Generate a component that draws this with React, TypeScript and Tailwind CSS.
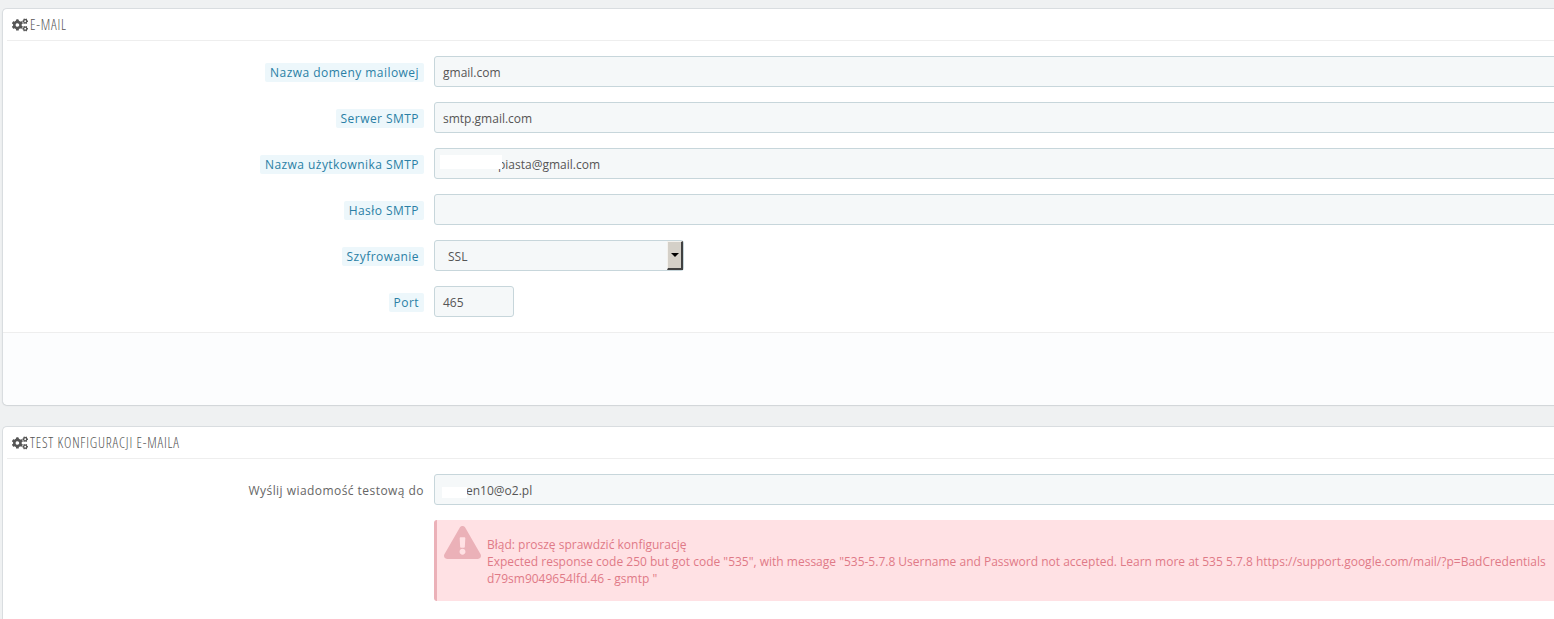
import React from 'react';
import { FaCogs, FaExclamationTriangle } from 'react-icons/fa';

const inputClass = 'h-[31px] w-[1200px] shrink-0 rounded-[3px] border border-[#c7d6db] bg-[#f5f8f9] pl-2 text-[12px] leading-[31px] text-[#555]';

const PanelHeading: React.FC<{ title: string }> = ({ title }) => (
    <div className="mx-1 flex h-[32px] items-center gap-[2px] border-b border-[#eeeeee] pl-[5px] text-[14px] text-[#555]">
        <FaCogs className="h-[14px] w-[16px] text-[#555]" />
        <span className="font-light font-stretch-[75%] tracking-[0.8px]">{title}</span>
    </div>
);

const Label: React.FC<{ text: string; hint?: boolean }> = ({ text, hint = true }) => (
    <div className="flex w-[421px] shrink-0 justify-end pt-[2px]">
        <span className={hint ? 'rounded-[2px] bg-[#edf7fb] px-[5px] leading-[19px] tracking-[0.45px] text-[#2a7fa5]' : 'leading-[19px] tracking-[0.45px] text-[#666]'}>
            {text}
        </span>
    </div>
);

const FormRow: React.FC<{ label: string; hint?: boolean; children?: React.ReactNode }> = ({ label, hint, children }) => (
    <div className="flex items-center gap-[10px]">
        <Label text={label} hint={hint} />
        {children}
    </div>
);

const Masked: React.FC<{ mask: string; children: React.ReactNode }> = ({ mask, children }) => (
    <div className={inputClass + ' relative'}>
        <span className={`absolute bg-white ${mask}`} />
        {children}
    </div>
);

const App: React.FC = () => {
    return (
        <div className="h-[619px] w-full overflow-hidden bg-[#eff1f2] pt-2 pl-[2px] font-['Open_Sans',sans-serif] text-[12px]">
            <div className="w-[1700px] rounded-[5px] border-t border-l border-[#d9dde0] bg-white shadow-[0_1px_1px_#d0d4d7]">
                <PanelHeading title="E-MAIL" />
                <div className="flex flex-col gap-[15px] pt-[15px] pb-[15px]">
                    <FormRow label="Nazwa domeny mailowej">
                        <div className={inputClass}>gmail.com</div>
                    </FormRow>
                    <FormRow label="Serwer SMTP">
                        <div className={inputClass}>smtp.gmail.com</div>
                    </FormRow>
                    <FormRow label="Nazwa użytkownika SMTP">
                        <Masked mask="top-[6px] left-[5px] h-[14px] w-[62px]">
                            <span className="pl-[55px]">piasta@gmail.com</span>
                        </Masked>
                    </FormRow>
                    <FormRow label="Hasło SMTP">
                        <div className={inputClass} />
                    </FormRow>
                    <FormRow label="Szyfrowanie">
                        <div className="flex h-[31px] w-[250px] shrink-0 items-center justify-between rounded-[3px] border border-[#c7d6db] bg-[#f5f8f9] pl-[13px] text-[12px] text-[#555]">
                            <span className="pt-[2px]">SSL</span>
                            <span className="flex h-[29px] w-[16px] items-center justify-center border-t border-l border-t-[#f4f2ee] border-l-[#f4f2ee] border-r-2 border-b-2 border-r-[#404040] border-b-[#404040] bg-[#d4d0c8]">
                                <span className="h-0 w-0 border-x-[4px] border-t-[4px] border-x-transparent border-t-black" />
                            </span>
                        </div>
                    </FormRow>
                    <FormRow label="Port">
                        <div className={inputClass + ' !w-[80px]'}>465</div>
                    </FormRow>
                </div>
                <div className="h-[73px] rounded-b-[5px] border-t border-[#eeeeee] bg-[#fcfdfe]" />
            </div>

            <div className="mt-[21px] w-[1700px] rounded-[5px] border-t border-l border-[#d9dde0] bg-white pb-10">
                <PanelHeading title="TEST KONFIGURACJI E-MAILA" />
                <div className="flex flex-col gap-[15px] pt-[15px]">
                    <FormRow label="Wyślij wiadomość testową do" hint={false}>
                        <Masked mask="top-[12px] left-[7px] h-[11px] w-[25px]">
                            <span className="pl-[23px]">en10@o2.pl</span>
                        </Masked>
                    </FormRow>
                    <div className="flex gap-[10px]">
                        <div className="w-[421px] shrink-0" />
                        <div className="flex h-[81px] w-[1200px] gap-[6px] rounded-[3px] border-l-[3px] border-[#ebb1b8] bg-[#ffe1e4] pt-[6px] pl-[7px] leading-[17px] text-[#df7a87]">
                            <FaExclamationTriangle className="h-[33px] w-[37px] shrink-0 text-[#ebb1b8]" />
                            <div className="w-[1075px] pt-[10px]">
                                <div>Błąd: proszę sprawdzić konfigurację</div>
                                <div>Expected response code 250 but got code "535", with message "535-5.7.8 Username and Password not accepted. Learn more at 535 5.7.8 https://support.google.com/mail/?p=BadCredentials d79sm9049654lfd.46 - gsmtp "</div>
                            </div>
                        </div>
                    </div>
                </div>
            </div>
        </div>
    );
};

export default App;
